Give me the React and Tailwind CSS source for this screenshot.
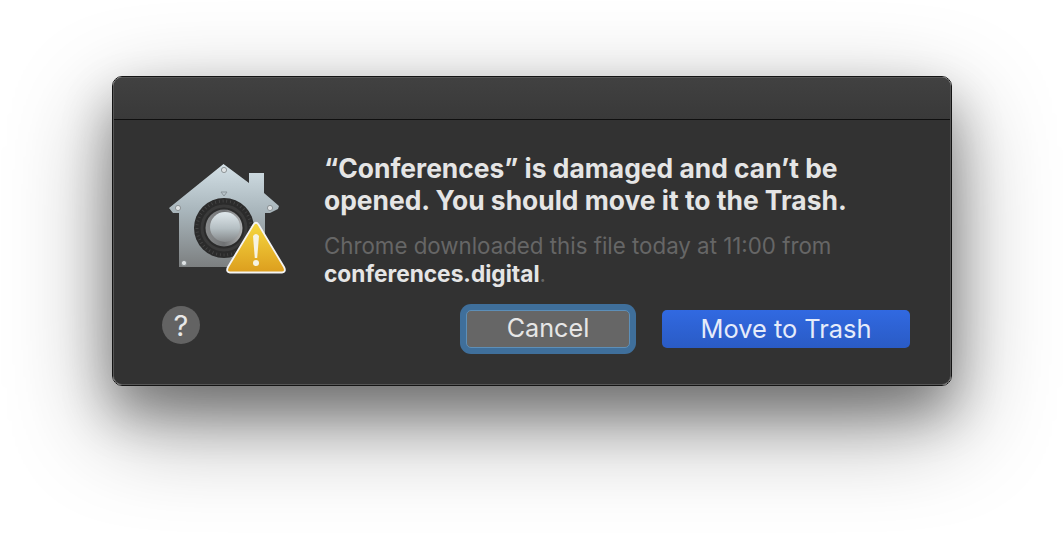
import React from "react";

const font = { fontFamily: "Inter, sans-serif" };

// Gatekeeper house with the safe dial and the warning badge
function GatekeeperIcon() {
  return (
    <svg width="130" height="120" viewBox="160 160 130 120" className="block">
      <defs>
        <linearGradient id="house" x1="0" y1="0" x2="0" y2="1">
          <stop offset="0" stopColor="#d3e0e6" />
          <stop offset="0.45" stopColor="#a9b6bc" />
          <stop offset="1" stopColor="#7c7f80" />
        </linearGradient>
        <linearGradient id="knob" x1="0" y1="0" x2="0" y2="1">
          <stop offset="0" stopColor="#dfe8ec" />
          <stop offset="0.55" stopColor="#b5bfc3" />
          <stop offset="1" stopColor="#85888a" />
        </linearGradient>
        <linearGradient id="knobRim" x1="0" y1="0" x2="1" y2="0">
          <stop offset="0" stopColor="#8a8c8d" />
          <stop offset="0.5" stopColor="#6f7173" />
          <stop offset="1" stopColor="#b0b2b3" />
        </linearGradient>
        <linearGradient id="warn" x1="0" y1="0" x2="0" y2="1">
          <stop offset="0" stopColor="#f6d840" />
          <stop offset="1" stopColor="#dc9e1e" />
        </linearGradient>
      </defs>
      <path
        d="M223.5 164 L249 183 L249 173 L264 173 L264 193 L279 206 L278 209 L270 213 L265 213 L265 267 L179 267 L179 213 L173 213 L169 208 Z"
        fill="url(#house)"
      />
      <path d="M221 192 L227 192 L224 196 Z" fill="none" stroke="#8b9499" strokeWidth="1" />
      {[[224, 170], [178, 208], [270, 208], [184, 263]].map(([x, y]) => (
        <circle key={x} cx={x} cy={y} r="2.6" fill="#dfe3e4" stroke="#7d8486" strokeWidth="0.8" />
      ))}
      <circle cx="224" cy="228" r="30" fill="#2b2b2b" />
      <circle cx="224" cy="228" r="27" fill="none" stroke="#484848" strokeWidth="3" strokeDasharray="0.8 3" />
      <circle cx="224" cy="228" r="22" fill="none" stroke="#3a3a3a" strokeWidth="3" />
      <circle cx="224" cy="228" r="18.5" fill="url(#knobRim)" />
      <circle cx="225" cy="227" r="15" fill="url(#knob)" />
      <path
        d="M253.5 224.5 Q256 221 258.5 224.5 L284 267 Q286.5 272 282 272.5 L230 272.5 Q225.5 272 228 267 Z"
        fill="url(#warn)"
        stroke="#f4f4f4"
        strokeWidth="1.8"
      />
      <path d="M253 236 Q256 232 259 236 L257.2 258 L254.8 258 Z" fill="#f6f3e2" />
      <circle cx="256" cy="263" r="3" fill="#f6f3e2" />
    </svg>
  );
}

export default function App() {
  return (
    <div className="w-full h-[534px] bg-white overflow-hidden pt-[76px] pl-[112px]" style={font}>
      <div className="w-[840px] h-[310px] rounded-[10px] border border-[#141414] shadow-[0_36px_100px_rgba(0,0,0,0.42),0_26px_50px_rgba(0,0,0,0.32)]">
        <div className="h-full flex flex-col rounded-[9px] bg-[#323232] border border-[#565656] overflow-hidden">
          <div className="h-[42px] shrink-0 bg-gradient-to-b from-[#414141] to-[#393939] border-b border-[#0f0f0f]" />
          <div className="flex-1 flex flex-col">
            <div className="flex">
              <div className="w-[210px] shrink-0 pt-[40px] pl-[46px]">
                <GatekeeperIcon />
              </div>
              <div className="pt-[32px]">
                <div className="text-[26.4px] leading-[32px] font-bold text-[#e5e5e5] w-[600px] whitespace-pre-line">
                  {"“Conferences” is damaged and can’t be\nopened. You should move it to the Trash."}
                </div>
                <div className="mt-[16px] text-[22.3px] leading-[28px] text-[#666666] w-[600px] whitespace-pre-line">
                  {"Chrome downloaded this file today at 11:00 from\n"}
                  <span className="font-bold text-[22.7px] text-[#e5e5e5]">conferences.digital</span>.
                </div>
              </div>
            </div>
            <div className="flex items-start mt-[18px] pl-[48px]">
              <div className="w-[38px] h-[38px] rounded-full bg-[#636363] flex items-center justify-center text-[29px] leading-none text-[#e8e8e8]">
                ?
              </div>
              <button className="ml-[266px] mt-[4px] w-[164px] h-[38px] rounded-[5px] bg-[#666666] border border-[#5d8fb8] ring-[6px] ring-[#3f6f9b] text-[25.2px] leading-none text-[#e6e6e6]">
                Cancel
              </button>
              <button className="ml-[32px] mt-[4px] w-[248px] h-[38px] rounded-[5px] bg-gradient-to-b from-[#3169e1] to-[#2a5bc5] text-[25.4px] leading-none text-[#e6ecfa]">
                Move to Trash
              </button>
            </div>
          </div>
        </div>
      </div>
    </div>
  );
}
